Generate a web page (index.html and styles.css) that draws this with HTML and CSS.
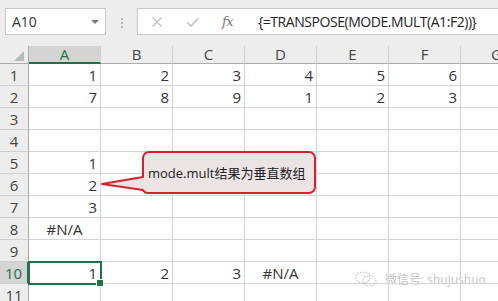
FILE: index.html
```html
<!DOCTYPE html>
<html>
<head>
<meta charset="utf-8">
<link rel="stylesheet" href="styles.css">
</head>
<body>
<div class="app">
  <div class="toolbar">
    <div class="namebox"><span>A10</span><span class="caret"></span></div>
    <div class="sep"><i></i><i></i><i></i></div>
    <div class="fbar">
      <div class="ficons">
        <svg class="ic" width="12" height="12" viewBox="0 0 12 12"><path d="M1.5 1.5 L10.5 10.5 M10.5 1.5 L1.5 10.5" stroke="#c2c2c2" stroke-width="1.4" fill="none"/></svg>
        <svg class="ic" width="14" height="12" viewBox="0 0 14 12"><path d="M1.5 6.5 L5 10 L12.5 2" stroke="#c2c2c2" stroke-width="1.6" fill="none"/></svg>
        <span class="fx">fx</span>
      </div>
      <div class="ftext">{=TRANSPOSE(MODE.MULT(A1:F2))}</div>
    </div>
  </div>
  <div class="sheet">
    <div class="grid">
      <div class="hd corner"><span class="tri"></span></div>
      <div class="hd col sel">A</div><div class="hd col">B</div><div class="hd col">C</div><div class="hd col">D</div><div class="hd col">E</div><div class="hd col">F</div><div class="hd col">G</div>

      <div class="hd row">1</div><div class="c">1</div><div class="c">2</div><div class="c">3</div><div class="c">4</div><div class="c">5</div><div class="c">6</div><div class="c"></div>
      <div class="hd row">2</div><div class="c">7</div><div class="c">8</div><div class="c">9</div><div class="c">1</div><div class="c">2</div><div class="c">3</div><div class="c"></div>
      <div class="hd row">3</div><div class="c"></div><div class="c"></div><div class="c"></div><div class="c"></div><div class="c"></div><div class="c"></div><div class="c"></div>
      <div class="hd row">4</div><div class="c"></div><div class="c"></div><div class="c"></div><div class="c"></div><div class="c"></div><div class="c"></div><div class="c"></div>
      <div class="hd row">5</div><div class="c">1</div><div class="c"></div><div class="c"></div><div class="c"></div><div class="c"></div><div class="c"></div><div class="c"></div>
      <div class="hd row">6</div><div class="c">2</div><div class="c"></div><div class="c"></div><div class="c"></div><div class="c"></div><div class="c"></div><div class="c"></div>
      <div class="hd row">7</div><div class="c">3</div><div class="c"></div><div class="c"></div><div class="c"></div><div class="c"></div><div class="c"></div><div class="c"></div>
      <div class="hd row">8</div><div class="c err">#N/A</div><div class="c"></div><div class="c"></div><div class="c"></div><div class="c"></div><div class="c"></div><div class="c"></div>
      <div class="hd row">9</div><div class="c"></div><div class="c"></div><div class="c"></div><div class="c"></div><div class="c"></div><div class="c"></div><div class="c"></div>
      <div class="hd row sel">10</div><div class="c active">1<span class="handle"></span></div><div class="c">2</div><div class="c">3</div><div class="c err">#N/A</div><div class="c"></div><div class="c"></div><div class="c"></div>
      <div class="hd row">11</div><div class="c"></div><div class="c"></div><div class="c"></div><div class="c"></div><div class="c"></div><div class="c"></div><div class="c"></div>
    </div>

    <div class="callout">
      <svg class="callout-shape" width="218" height="46" viewBox="0 0 218 46"><path d="M49 2 H209 A6 6 0 0 1 215 8 V37 A6 6 0 0 1 209 43 H49 A6 6 0 0 1 43 40 L2 34 L43 27 V8 A6 6 0 0 1 49 2 Z" fill="#ebe3e4" stroke="#d8222b" stroke-width="2" stroke-linejoin="round"/></svg>
      <span class="callout-text">mode.mult结果为垂直数组</span>
    </div>

    <div class="watermark">
      <svg width="23" height="16" viewBox="0 0 23 16"><g fill="none" stroke="#c4c4c4" stroke-width="1.1" stroke-dasharray="1.6 1"><ellipse cx="8" cy="6.5" rx="7" ry="5.5"/><ellipse cx="14.5" cy="9.8" rx="6.5" ry="5"/></g></svg>
      <span class="wm-text">微信号: shujushuo</span>
    </div>
  </div>
</div>
</body>
</html>
```

FILE: styles.css
```css
html, body {
  margin: 0;
  padding: 0;
  background: #ffffff;
}
.app {
  width: 498px;
  height: 301px;
  overflow: hidden;
  font-family: "Open Sans", "Noto Sans CJK SC", sans-serif;
  color: #222;
}
.toolbar {
  height: 46px;
  background: #ededed;
  display: flex;
  align-items: flex-start;
  padding: 8px 0 0 5px;
  box-sizing: border-box;
}
.namebox {
  width: 101px;
  height: 27px;
  box-sizing: border-box;
  background: #fff;
  border: 1px solid #c8c8c8;
  display: flex;
  align-items: center;
  justify-content: space-between;
  padding: 0 6px 0 6px;
  font-size: 14px;
  color: #333;
}
.caret {
  width: 0;
  height: 0;
  border-left: 4px solid transparent;
  border-right: 4px solid transparent;
  border-top: 4px solid #7a7a7a;
  margin-top: 1px;
}
.sep {
  width: 31px;
  display: flex;
  flex-direction: column;
  align-items: center;
  gap: 2px;
  padding-top: 10px;
}
.sep i {
  width: 2px;
  height: 2px;
  background: #b5b5b5;
  display: block;
}
.fbar {
  flex: 1;
  height: 27px;
  box-sizing: border-box;
  background: #fff;
  border: 1px solid #c8c8c8;
  border-right: none;
  display: flex;
  align-items: center;
}
.ficons {
  width: 112px;
  display: flex;
  align-items: center;
  padding-left: 13px;
  gap: 0;
  box-sizing: border-box;
}
.ficons .ic:first-child { margin-right: 23px; }
.ficons .ic:nth-child(2) { margin-right: 22px; }
.fx {
  font-family: "DejaVu Serif", "Liberation Serif", serif;
  font-style: italic;
  font-size: 13px;
  color: #777;
  letter-spacing: -0.5px;
}
.ftext {
  font-size: 14px;
  color: #222;
  white-space: nowrap;
  padding-left: 8px;
  letter-spacing: -0.45px;
}
.sheet {
  position: relative;
}
.grid {
  display: grid;
  grid-template-columns: 29px repeat(7, 72px);
  grid-template-rows: 18px repeat(11, 22px);
}
.hd {
  background: #ededed;
  color: #444;
  font-size: 15px;
  display: flex;
  align-items: center;
  justify-content: center;
  box-sizing: border-box;
}
.hd.col {
  border-right: 1px solid #d0d0d0;
  border-bottom: 1px solid #ababab;
  line-height: 1;
}
.hd.row {
  border-right: 1px solid #ababab;
  border-bottom: 1px solid #d0d0d0;
}
.hd.col.sel {
  background: #d4d4d4;
  color: #217346;
  border-bottom: 2px solid #217346;
}
.hd.row.sel {
  background: #d4d4d4;
  color: #217346;
  border-right: 2px solid #217346;
}
.corner {
  position: relative;
  border-right: 1px solid #ababab;
  border-bottom: 1px solid #ababab;
}
.tri {
  position: absolute;
  right: 4px;
  bottom: 2px;
  width: 0;
  height: 0;
  border-left: 10px solid transparent;
  border-bottom: 10px solid #b9b9b9;
}
.c {
  position: relative;
  box-sizing: border-box;
  border-right: 1px solid #d4d4d4;
  border-bottom: 1px solid #d4d4d4;
  font-size: 15px;
  color: #333;
  display: flex;
  align-items: center;
  justify-content: flex-end;
  padding-right: 3px;
}
.c.err {
  justify-content: center;
  padding-right: 0;
}
.c.active {
  outline: 2px solid #217346;
  outline-offset: -1px;
  z-index: 1;
}
.handle {
  position: absolute;
  right: -4px;
  bottom: -4px;
  width: 6px;
  height: 6px;
  background: #217346;
  border: 1px solid #fff;
}
.callout {
  position: absolute;
  left: 100px;
  top: 104px;
  width: 218px;
  height: 46px;
}
.callout-shape {
  position: absolute;
  left: 0;
  top: 0;
}
.callout-text {
  position: absolute;
  left: 48px;
  top: 13px;
  font-size: 13px;
  color: #222;
  white-space: nowrap;
}
.watermark {
  position: absolute;
  left: 355px;
  top: 224px;
  display: flex;
  align-items: center;
  gap: 7px;
  font-size: 12px;
  color: #c4c4c4;
  white-space: nowrap;
  text-shadow: 0 0 1px #fff, 0 0 1px #fff;
}
.wm-text {
  white-space: nowrap;
  letter-spacing: 0;
}
```
